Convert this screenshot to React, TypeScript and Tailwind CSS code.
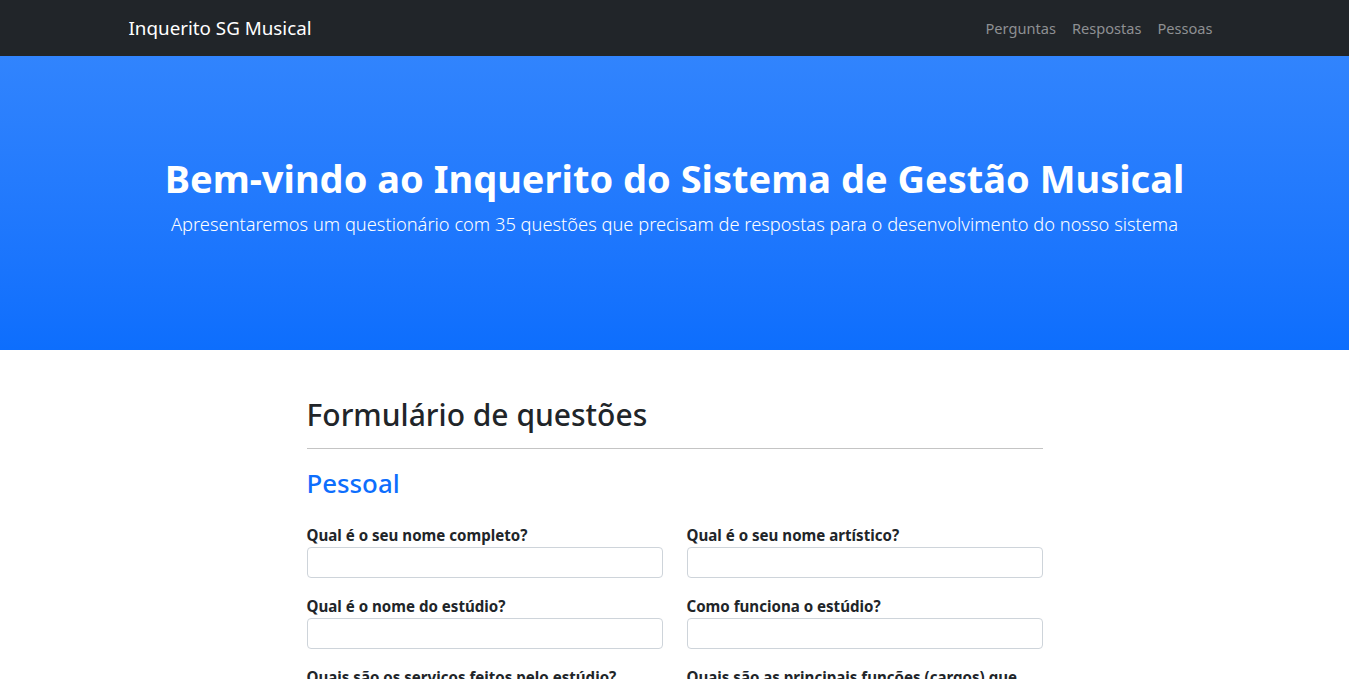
const sans = "font-['Noto_Sans',_'Open_Sans',_sans-serif]"

function Field({ label }: { label: string }) {
  return (
    <div className="mb-4">
      <label className="block text-[15.1px] font-bold leading-6 text-[#212529]">{label}</label>
      <input
        type="text"
        className="block h-[31px] w-full rounded-[4px] border border-[#ced4da] bg-white px-2 text-sm outline-none"
      />
    </div>
  )
}

export default function App() {
  return (
    <main className={`min-h-screen bg-white text-[#212529] ${sans}`}>
      <nav className="h-14 bg-[#212529]">
        <div className="mx-auto flex h-full w-[1092px] items-center justify-between">
          <a className="text-[18.8px] leading-[30px] text-white">Inquerito SG Musical</a>
          <ul className="flex items-center">
            {["Perguntas", "Respostas", "Pessoas"].map((item) => (
              <li key={item}>
                <a className="block px-2 py-2 text-[14.6px] leading-6 text-[#8e9093]">{item}</a>
              </li>
            ))}
          </ul>
        </div>
      </nav>

      <section className="h-[294px] bg-gradient-to-b from-[#3184fd] to-[#0d6efd] pt-[98px] text-center text-white">
        <h1 className="text-[38px] font-bold leading-[48px]">Bem-vindo ao Inquerito do Sistema de Gestão Musical</h1>
        <p className="mt-[7px] text-[18.3px] font-light leading-[30px]">
          Apresentaremos um questionário com 35 questões que precisam de respostas para o desenvolvimento do nosso sistema
        </p>
      </section>

      <section className="mx-auto w-[736px] pt-[46px]">
        <h2 className="text-[30px] font-medium leading-[38px]">Formulário de questões</h2>
        <hr className="mt-[14px] border-t border-[#c4c4c4]" />
        <h3 className="mt-[17px] text-[25.8px] font-medium leading-[34px] text-[#0d6efd]">Pessoal</h3>
        <form className="mt-[23px] grid grid-cols-2 gap-x-6">
          <Field label="Qual é o seu nome completo?" />
          <Field label="Qual é o seu nome artístico?" />
          <Field label="Qual é o nome do estúdio?" />
          <Field label="Como funciona o estúdio?" />
          <Field label="Quais são os serviços feitos pelo estúdio?" />
          <Field label="Quais são as principais funções (cargos) que existem no estúdio?" />
        </form>
      </section>
    </main>
  )
}
